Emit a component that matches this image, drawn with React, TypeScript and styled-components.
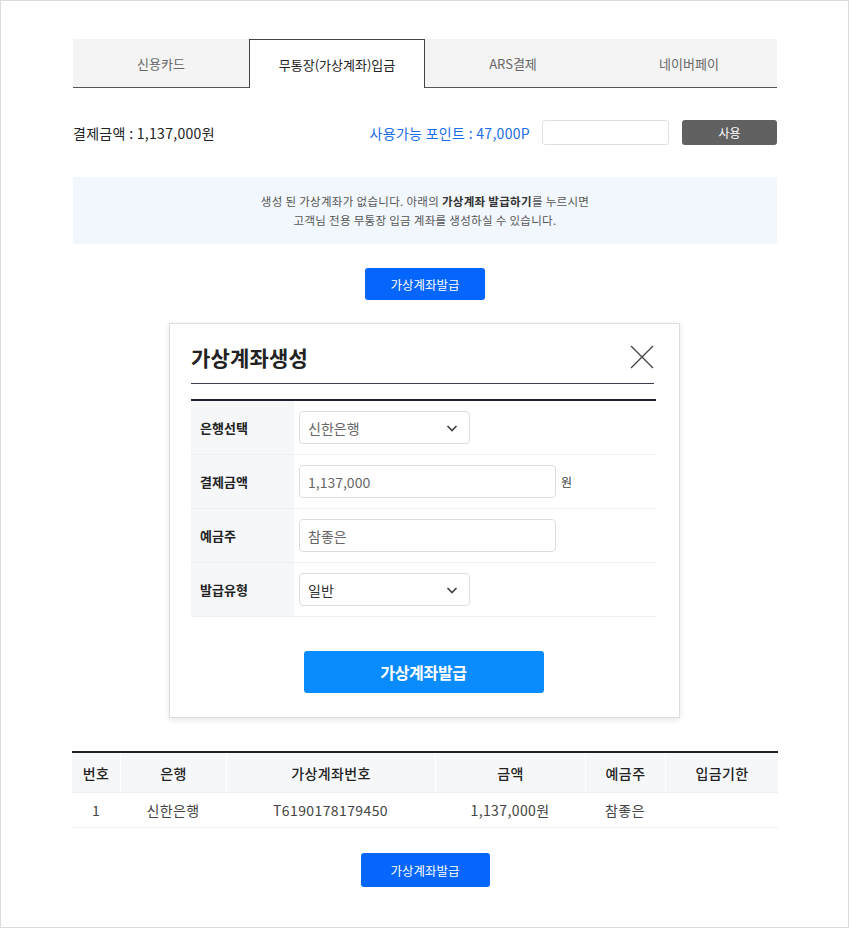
import React from 'react';
import styled, { createGlobalStyle } from 'styled-components';

const GlobalStyle = createGlobalStyle`
  html, body {
    margin: 0;
    padding: 0;
    background: #fff;
  }
  body {
    font-family: "Noto Sans CJK KR", "Noto Sans", sans-serif;
    color: #222;
  }
  * { box-sizing: border-box; }
`;

const Frame = styled.div`
  width: 849px;
  height: 928px;
  border: 1px solid #dcdcdc;
  padding: 38px 71px 0 72px;
`;

const Tabs = styled.div`
  display: grid;
  grid-template-columns: repeat(4, 1fr);
  height: 49px;
  border-bottom: 1px solid #555;
`;

const Tab = styled.div<{ $active?: boolean }>`
  display: flex;
  align-items: center;
  justify-content: center;
  font-size: 13px;
  color: ${p => (p.$active ? '#222' : '#666')};
  background: ${p => (p.$active ? '#fff' : '#f4f4f4')};
  border: ${p => (p.$active ? '1px solid #444' : 'none')};
  border-bottom: none;
  margin-bottom: ${p => (p.$active ? '-1px' : '0')};
  padding-top: 1px;
`;

const PointRow = styled.div`
  display: flex;
  align-items: center;
  margin-top: 32px;
  height: 25px;
`;

const Amount = styled.div`
  flex: 1;
  font-size: 14px;
  color: #222;
  letter-spacing: 0.3px;
`;

const PointLabel = styled.div`
  font-size: 14px;
  color: #1a6ee8;
  margin-right: 12px;
  letter-spacing: 0.3px;
`;

const PointInput = styled.div`
  width: 127px;
  height: 25px;
  border: 1px solid #e0e0e0;
  border-radius: 3px;
  margin-right: 13px;
`;

const GrayButton = styled.button`
  width: 95px;
  height: 25px;
  border: none;
  border-radius: 3px;
  background: #616161;
  color: #fff;
  font-family: inherit;
  font-size: 12px;
  padding: 0;
`;

const Notice = styled.div`
  margin-top: 32px;
  height: 67px;
  background: #f2f7fd;
  display: flex;
  flex-direction: column;
  align-items: center;
  justify-content: center;
  font-size: 11.5px;
  line-height: 19px;
  color: #555;
  letter-spacing: 0.3px;

  b {
    color: #333;
    font-weight: 700;
  }
`;

const Center = styled.div<{ $top: number }>`
  display: flex;
  justify-content: center;
  margin-top: ${p => p.$top}px;
`;

const BlueButton = styled.button<{ $w: number; $h: number }>`
  width: ${p => p.$w}px;
  height: ${p => p.$h}px;
  border: none;
  border-radius: 3px;
  background: #0466fd;
  color: #fff;
  font-family: inherit;
  font-size: 12.5px;
  padding: 0;
`;

const Modal = styled.div`
  width: 511px;
  margin: 23px auto 0 96px;
  border: 1px solid #dcdcdc;
  box-shadow: 0 2px 6px rgba(0, 0, 0, 0.1);
  background: #fff;
  padding: 0 23px 24px 21px;
`;

const ModalHead = styled.div`
  display: flex;
  align-items: center;
  justify-content: space-between;
  height: 60px;
  border-bottom: 1px solid #3a3e4a;
  margin-right: 2px;
  padding-top: 6px;
`;

const ModalTitle = styled.h2`
  margin: 0;
  font-size: 21px;
  font-weight: 700;
  color: #222;
  letter-spacing: 0.2px;
`;

const CloseIcon = styled.svg`
  width: 24px;
  height: 24px;
`;

const FormTable = styled.div`
  margin-top: 15px;
  border-top: 2px solid #1f2230;
`;

const FormRow = styled.div`
  display: flex;
  height: 54px;
  border-bottom: 1px solid #eeeff2;
`;

const FormLabel = styled.div`
  width: 103px;
  background: #f6f7f9;
  display: flex;
  align-items: center;
  padding-left: 9px;
  font-size: 13px;
  font-weight: 700;
  color: #222;
`;

const FormCell = styled.div`
  flex: 1;
  display: flex;
  align-items: center;
  padding-left: 5px;
  gap: 5px;
  font-size: 12px;
  color: #444;
`;

const Field = styled.div<{ $w: number; $dark?: boolean }>`
  width: ${p => p.$w}px;
  height: 33px;
  border: 1px solid #dcdde0;
  border-radius: 4px;
  display: flex;
  align-items: center;
  justify-content: space-between;
  padding: 0 10px 0 8px;
  font-size: 14px;
  color: ${p => (p.$dark ? '#333' : '#666')};
`;

const Chevron = styled.svg`
  width: 14px;
  height: 14px;
`;

const SubmitButton = styled.button`
  width: 240px;
  height: 42px;
  border: none;
  border-radius: 3px;
  background: #0a8cff;
  color: #fff;
  font-family: inherit;
  font-size: 16px;
  font-weight: 700;
  padding: 0;
  letter-spacing: -0.3px;
`;

const ListTable = styled.div`
  margin: 33px -1px 0 -1px;
  border-top: 2px solid #222;
`;

const ListRow = styled.div<{ $head?: boolean }>`
  display: grid;
  grid-template-columns: 48px 106px 209px 150px 80px 1fr;
  height: ${p => (p.$head ? '40px' : '35px')};
  background: ${p => (p.$head ? '#f6f7f9' : '#fff')};
  border-bottom: 1px solid #eeeff2;
`;

const ListCell = styled.div<{ $head?: boolean }>`
  display: flex;
  align-items: center;
  justify-content: center;
  font-size: 14px;
  letter-spacing: 0.4px;
  font-weight: ${p => (p.$head ? 500 : 400)};
  color: ${p => (p.$head ? '#222' : '#444')};
  border-left: ${p => (p.$head ? '1px solid #fff' : 'none')};
  &:first-child { border-left: none; }
`;

const headers = ['번호', '은행', '가상계좌번호', '금액', '예금주', '입금기한'];
const rows = [['1', '신한은행', 'T6190178179450', '1,137,000원', '참좋은', '']];

const ChevronDown = () => (
  <Chevron viewBox="0 0 14 14">
    <path d="M2.5 5 L7 9.5 L11.5 5" fill="none" stroke="#444" strokeWidth="1.7" />
  </Chevron>
);

export default function App() {
  return (
    <>
      <GlobalStyle />
      <Frame>
        <Tabs>
          <Tab>신용카드</Tab>
          <Tab $active>무통장(가상계좌)입금</Tab>
          <Tab>ARS결제</Tab>
          <Tab>네이버페이</Tab>
        </Tabs>

        <PointRow>
          <Amount>결제금액 : 1,137,000원</Amount>
          <PointLabel>사용가능 포인트 : 47,000P</PointLabel>
          <PointInput />
          <GrayButton>사용</GrayButton>
        </PointRow>

        <Notice>
          <div>
            생성 된 가상계좌가 없습니다. 아래의 <b>가상계좌 발급하기</b>를 누르시면
          </div>
          <div>고객님 전용 무통장 입금 계좌를 생성하실 수 있습니다.</div>
        </Notice>

        <Center $top={24}>
          <BlueButton $w={120} $h={32}>가상계좌발급</BlueButton>
        </Center>

        <Modal>
          <ModalHead>
            <ModalTitle>가상계좌생성</ModalTitle>
            <CloseIcon viewBox="0 0 24 24">
              <path d="M1 1 L23 23 M23 1 L1 23" stroke="#444" strokeWidth="1.3" fill="none" />
            </CloseIcon>
          </ModalHead>

          <FormTable>
            <FormRow>
              <FormLabel>은행선택</FormLabel>
              <FormCell>
                <Field $w={171}>
                  신한은행
                  <ChevronDown />
                </Field>
              </FormCell>
            </FormRow>
            <FormRow>
              <FormLabel>결제금액</FormLabel>
              <FormCell>
                <Field $w={257}>1,137,000</Field>
                원
              </FormCell>
            </FormRow>
            <FormRow>
              <FormLabel>예금주</FormLabel>
              <FormCell>
                <Field $w={257}>참좋은</Field>
              </FormCell>
            </FormRow>
            <FormRow>
              <FormLabel>발급유형</FormLabel>
              <FormCell>
                <Field $w={171} $dark>
                  일반
                  <ChevronDown />
                </Field>
              </FormCell>
            </FormRow>
          </FormTable>

          <Center $top={34}>
            <SubmitButton>가상계좌발급</SubmitButton>
          </Center>
        </Modal>

        <ListTable>
          <ListRow $head>
            {headers.map(h => (
              <ListCell key={h} $head>{h}</ListCell>
            ))}
          </ListRow>
          {rows.map(r => (
            <ListRow key={r[2]}>
              {r.map((c, i) => (
                <ListCell key={i}>{c}</ListCell>
              ))}
            </ListRow>
          ))}
        </ListTable>

        <Center $top={25}>
          <BlueButton $w={129} $h={34}>가상계좌발급</BlueButton>
        </Center>
      </Frame>
    </>
  );
}
